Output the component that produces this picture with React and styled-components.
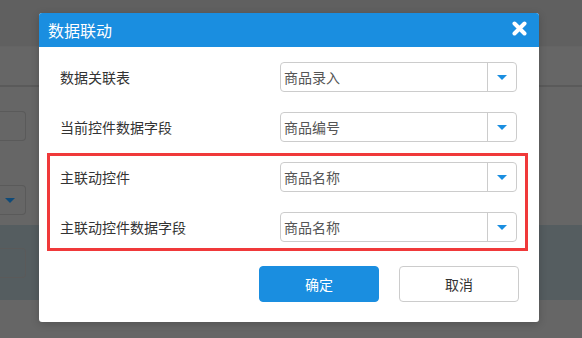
import React from 'react';
import styled, { createGlobalStyle } from 'styled-components';

const GlobalStyle = createGlobalStyle`
  html, body {
    margin: 0;
    padding: 0;
    width: 582px;
    height: 338px;
    overflow: hidden;
    background: #666666;
    font-family: "Noto Sans CJK SC", "Noto Sans", sans-serif;
  }
`;

const Page = styled.div`
  position: relative;
  width: 582px;
  height: 338px;
  background: #666666;
  display: flex;
  flex-direction: column;
`;

const TopBar = styled.div`
  height: 46px;
  background: #606060;
  border-bottom: 1px solid #646464;
`;

const SubBar = styled.div`
  height: 38px;
  border-bottom: 2px solid #5a5a5a;
`;

const BgRow = styled.div`
  height: ${props => props.h}px;
  display: flex;
  align-items: center;
  background: ${props => props.tint ? '#555d60' : 'transparent'};
`;

const BgField = styled.div`
  width: 25px;
  height: 28px;
  border: 1px solid #5a5a5a;
  border-left: none;
  border-radius: 0 4px 4px 0;
  display: flex;
  align-items: center;
  justify-content: center;
`;

const BgArrow = styled.span`
  width: 0;
  height: 0;
  border-left: 5px solid transparent;
  border-right: 5px solid transparent;
  border-top: 5px solid #0f4a78;
  margin-left: -6px;
`;

const Dialog = styled.div`
  position: absolute;
  left: 39px;
  top: 13px;
  width: 500px;
  background: #ffffff;
  border-radius: 3px;
  overflow: hidden;
  box-shadow: 0 2px 8px rgba(0, 0, 0, 0.2);
`;

const Header = styled.div`
  height: 34px;
  background: #1a8ee0;
  display: flex;
  align-items: center;
  justify-content: space-between;
  padding: 0 12px 0 9px;
`;

const Title = styled.h3`
  margin: 0;
  color: #ffffff;
  font-size: 16px;
  font-weight: normal;
  line-height: 34px;
`;

const Close = styled.button`
  border: none;
  background: transparent;
  padding: 0;
  width: 15px;
  height: 15px;
  margin-top: -3px;
  display: flex;
  align-items: center;
  justify-content: center;
  cursor: pointer;
`;

const Body = styled.div`
  padding: 15px 0 20px;
  display: flex;
  flex-direction: column;
`;

const Rows = styled.div`
  display: flex;
  flex-direction: column;
  gap: 20px;
  padding: 0 22px 0 21px;
`;

const Highlight = styled.div`
  margin: 11px 11px 0 8px;
  border: 3px solid #f0393a;
  padding: 6px 8px 6px 10px;
  display: flex;
  flex-direction: column;
  gap: 20px;
`;

const Row = styled.div`
  display: grid;
  grid-template-columns: 220px 1fr;
  align-items: center;
  height: 30px;
`;

const Label = styled.span`
  font-size: 14px;
  color: #333333;
`;

const Select = styled.div`
  height: 30px;
  box-sizing: border-box;
  border: 1px solid #cccccc;
  border-radius: 4px;
  display: flex;
  align-items: stretch;
`;

const Value = styled.span`
  flex: 1;
  font-size: 14px;
  color: #555555;
  line-height: 28px;
  padding-left: 3px;
`;

const Caret = styled.span`
  width: 28px;
  border-left: 1px solid #cccccc;
  display: flex;
  align-items: center;
  justify-content: center;

  &::after {
    content: '';
    width: 0;
    height: 0;
    border-left: 5px solid transparent;
    border-right: 5px solid transparent;
    border-top: 5px solid #1a8ee0;
  }
`;

const Footer = styled.div`
  display: flex;
  justify-content: flex-end;
  gap: 20px;
  padding: 15px 20px 0 0;
`;

const Button = styled.button`
  width: 120px;
  height: 36px;
  box-sizing: border-box;
  border-radius: 4px;
  font-family: inherit;
  font-size: 14px;
  cursor: pointer;
  border: 1px solid ${props => props.primary ? '#1a8ee0' : '#cccccc'};
  background: ${props => props.primary ? '#1a8ee0' : '#ffffff'};
  color: ${props => props.primary ? '#ffffff' : '#333333'};
`;

const CloseIcon = () => (
  <svg width="15" height="15" viewBox="0 0 15 15">
    <path d="M2.5 2.5 L12.5 12.5 M12.5 2.5 L2.5 12.5" stroke="#ffffff" strokeWidth="4" strokeLinecap="round" />
  </svg>
);

const Field = ({ label, value }) => (
  <Row>
    <Label>{label}</Label>
    <Select>
      <Value>{value}</Value>
      <Caret />
    </Select>
  </Row>
);

export default function App() {
  return (
    <>
      <GlobalStyle />
      <Page>
        <TopBar />
        <SubBar />
        <BgRow h={24} />
        <BgRow h={30}><BgField /></BgRow>
        <BgRow h={44} />
        <BgRow h={30}><BgField><BgArrow /></BgField></BgRow>
        <BgRow h={10} />
        <BgRow h={75} tint><BgField /></BgRow>
        <Dialog>
          <Header>
            <Title>数据联动</Title>
            <Close aria-label="关闭"><CloseIcon /></Close>
          </Header>
          <Body>
            <Rows>
              <Field label="数据关联表" value="商品录入" />
              <Field label="当前控件数据字段" value="商品编号" />
            </Rows>
            <Highlight>
              <Field label="主联动控件" value="商品名称" />
              <Field label="主联动控件数据字段" value="商品名称" />
            </Highlight>
            <Footer>
              <Button primary>确定</Button>
              <Button>取消</Button>
            </Footer>
          </Body>
        </Dialog>
      </Page>
    </>
  );
}
